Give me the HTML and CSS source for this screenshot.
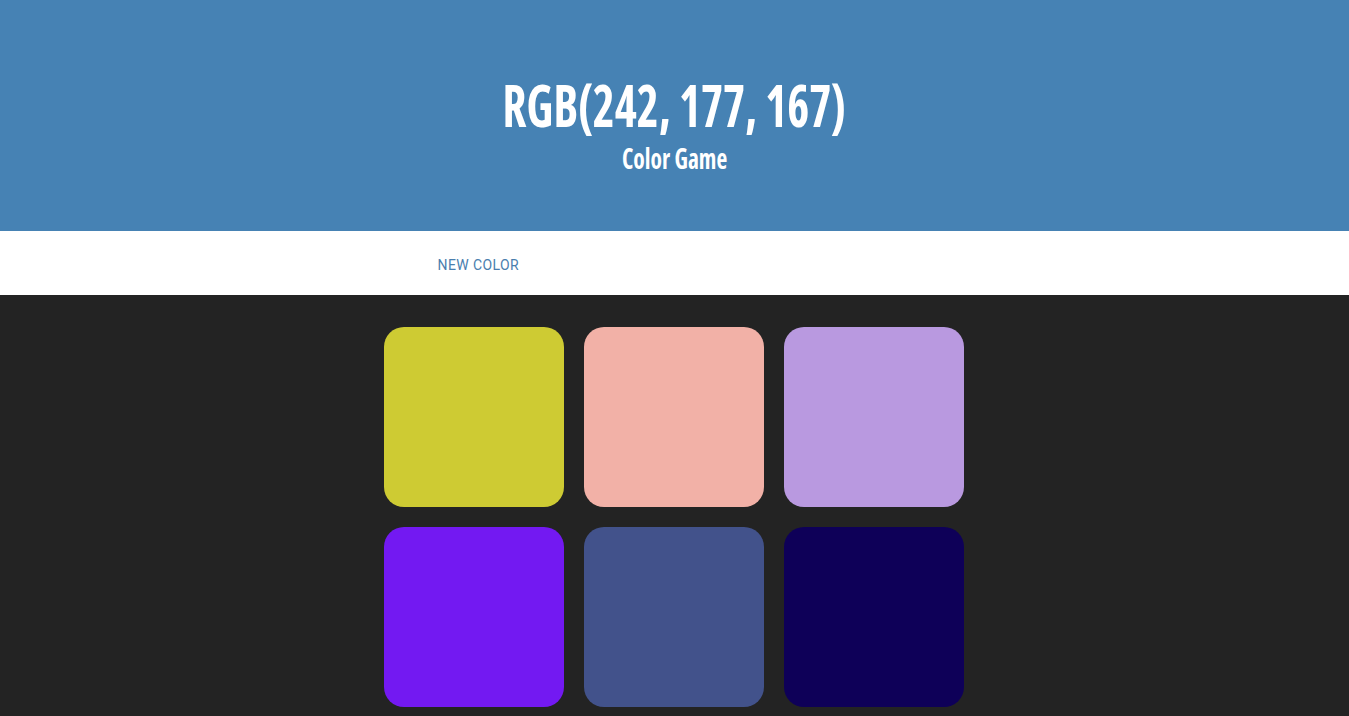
FILE: index.html
```html
<!DOCTYPE html>
<html>
<head>
<meta charset="utf-8">
<link rel="stylesheet" href="styles.css">
</head>
<body>
<header class="header">
  <h1 class="title"><span class="squeeze">RGB(242, 177, 167)</span></h1>
  <h2 class="subtitle"><span class="squeeze squeeze-sub">Color Game</span></h2>
</header>
<nav class="bar">
  <div class="bar-inner">
    <button class="btn">New Color</button>
  </div>
</nav>
<main class="board">
  <div class="grid">
    <div class="square" style="background: rgb(206, 203, 51)"></div>
    <div class="square" style="background: rgb(242, 177, 167)"></div>
    <div class="square" style="background: rgb(185, 153, 224)"></div>
    <div class="square" style="background: rgb(115, 25, 242)"></div>
    <div class="square" style="background: rgb(66, 82, 139)"></div>
    <div class="square" style="background: rgb(14, 0, 88)"></div>
  </div>
</main>
</body>
</html>
```
FILE: styles.css
```css
html, body { margin: 0; padding: 0; }
body { background: #232323; font-family: Roboto, "Liberation Sans", sans-serif; }
.header { background: #4682b4; color: #fff; text-align: center; height: 231px; box-sizing: border-box; padding-top: 74px; }
.title { margin: 0; font-family: "Open Sans", sans-serif; font-stretch: condensed; font-weight: bold; font-size: 59px; line-height: 60px; white-space: nowrap; }
.subtitle { margin: 9px 0 0; font-family: "Open Sans", sans-serif; font-stretch: condensed; font-weight: bold; font-size: 28px; line-height: 30px; white-space: nowrap; }
.squeeze { display: inline-block; transform: scaleX(0.794); transform-origin: center; }
.squeeze-sub { transform: scaleX(0.84); }
.bar { background: #fff; height: 64px; display: flex; align-items: center; justify-content: center; padding-top: 2px; box-sizing: border-box; }
.bar-inner { width: 500px; }
.btn { background: none; border: none; color: #4a7eae; font-family: Roboto, sans-serif; font-size: 14px; letter-spacing: 0.4px; text-transform: uppercase; padding: 0 0 0 13px; }
.board { padding-top: 32px; padding-right: 1px; }
.grid { width: 580px; margin: 0 auto; display: grid; grid-template-columns: repeat(3, 180px); gap: 20px; }
.square { height: 180px; border-radius: 20px; }
```
